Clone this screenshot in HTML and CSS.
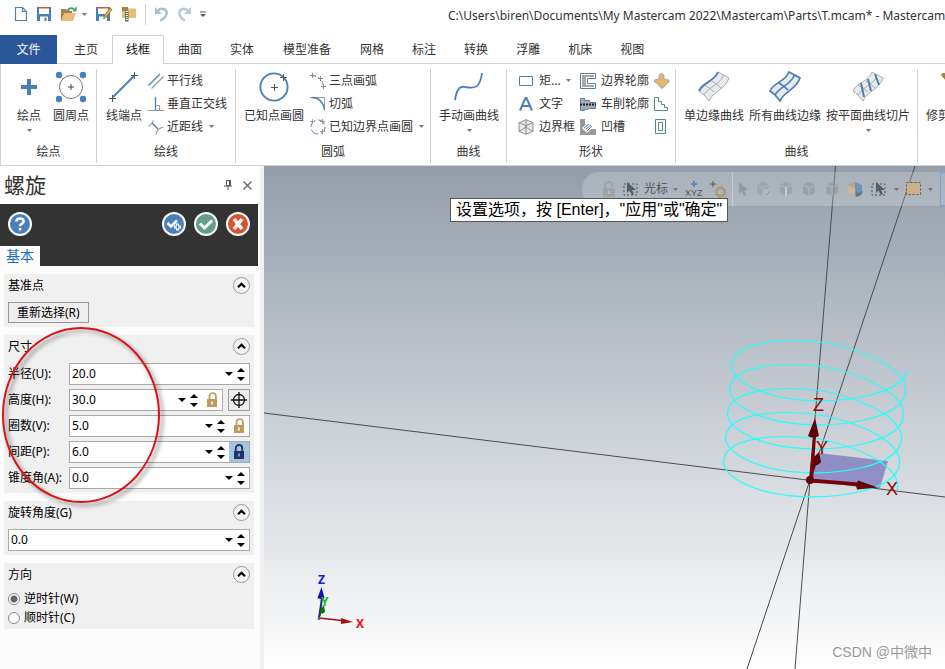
FILE: index.html
```html
<!DOCTYPE html>
<html lang="zh-CN">
<head>
<meta charset="utf-8">
<title>Mastercam</title>
<link rel="stylesheet" href="styles.css">
</head>
<body>
<svg class="defs" aria-hidden="true">
  <symbol id="caret" viewBox="0 0 5 3"><path d="M0 0h5L2.500 3z" fill="currentColor"/></symbol>
  <symbol id="drop" viewBox="0 0 8 4"><path d="M0 0h8L4 4z"/></symbol>
  <symbol id="up" viewBox="0 0 8 4"><path d="M0 4h8L4 0z"/></symbol>
  <symbol id="fold" viewBox="0 0 17 17"><circle cx="8.500" cy="8.500" r="8" fill="#f4f4f4" stroke="#999"/><path d="M5 10.200l3.500-3.500L12 10.200" fill="none" stroke="#000" stroke-width="2.200"/></symbol>
  <symbol id="unlock" viewBox="0 0 14 16"><path d="M4.500 7V4a3.200 3 0 0 1 6.400 0v3" fill="none" stroke="#c09a5c" stroke-width="1.700"/><path d="M2 7h10v8H2z" fill="#c09a5c"/><path d="M7 9.500v3" stroke="#fff" stroke-width="1.500"/></symbol>
  <symbol id="lock" viewBox="0 0 14 16"><path d="M3.800 7V4a3.200 3 0 0 1 6.400 0v3" fill="none" stroke="#22306c" stroke-width="1.800"/><path d="M2 7h10v8H2z" fill="#22306c"/><path d="M7 9.500v3" stroke="#b5cde4" stroke-width="1.300"/></symbol>
  <symbol id="mesh" viewBox="0 0 32 32"><path d="M20 1C16 11 5 11 1 20q5 3 10 10C15 20 27 19 31 7 28 5 25 4 20 1z" fill="#e8eaec"/></symbol>
  <symbol id="cube" viewBox="0 0 16 16"><path d="M8 1l6 2.500v8.500l-6 3-6-3V3.500z" fill="#8e979f"/><path d="M2 4l6 2.500V15M8 6.500L14 4" fill="none" stroke="#b6bec6"/></symbol>
</svg>

<header class="titlebar">
  <div class="quick">
    <button aria-label="新建"><svg width="14" height="16"><path d="M1.500 1.500h7l4 4v9h-11zM8.500 1.500v4h4" fill="#fff" stroke="#4a80ba" stroke-width="1.200"/></svg></button>
    <button aria-label="保存"><svg width="16" height="16"><path d="M1 1h14v14H1z" fill="#4a80ba"/><path d="M3 2h10v6H3z" fill="#fff"/><path d="M3 1h10v1.500H3z" fill="#d9532c"/><path d="M4 10.500h8V15H4z" fill="#fff"/><path d="M8.500 11.500h2V15h-2z" fill="#4a80ba"/></svg></button>
    <button aria-label="打开"><svg width="17" height="16"><path d="M1 3h5l1 2h5v10H1z" fill="#a97f3c"/><path d="M4 7h12l-3 8H1z" fill="#e8bd79"/><path d="M8 5.500C8 2 11 1.500 14 3" fill="none" stroke="#4d9a7d" stroke-width="2"/><path d="M12.500 5.500h4V0z" fill="#4d9a7d"/></svg></button>
    <svg class="caret" width="5" height="3"><use href="#caret"/></svg>
    <button aria-label="另存为"><svg width="18" height="16"><path d="M1 1h14v14H1z" fill="#4a80ba"/><path d="M3 2h10v6H3z" fill="#fff"/><path d="M3 1h10v1.500H3z" fill="#d9532c"/><path d="M4 10.500h8V15H4z" fill="#fff"/><path d="M8.500 13l1-3.500L15 2l2 1.500L11.500 11z" fill="#eeb23c" stroke="#7d5c20" stroke-width=".7"/></svg></button>
    <button aria-label="压缩"><svg width="16" height="16"><path d="M1 1h6l1 1.500h7V12H1z" fill="#e8bd79"/><path d="M1 1h6v4H1z" fill="#a97f3c"/><path d="M4 5h3.500v10.500H4z" fill="#666"/><path d="M5.800 5v10" stroke="#fff" stroke-width="2" stroke-dasharray="1 1"/></svg></button>
    <span class="rule"></span>
    <button aria-label="撤销"><svg width="15" height="16"><path d="M3 5.500C8 0 13.500 4 12.500 8c-.5 2.500-3 5-6.500 6.500" fill="none" stroke="#a6bedb" stroke-width="2.400"/><path d="M1 1v7h7z" fill="#a6bedb"/></svg></button>
    <button aria-label="重做"><svg width="15" height="16"><path d="M12 5.500C7 0 1.500 4 2.500 8c.5 2.500 2 5 5.500 6.500" fill="none" stroke="#b4c8df" stroke-width="2.400"/><path d="M14 1v7H7z" fill="#b4c8df"/></svg></button>
    <button aria-label="自定义"><svg width="6" height="7"><path d="M0 1h6" stroke="#555"/><path d="M0 3h6L3 6z" fill="#555"/></svg></button>
  </div>
  <div class="caption">C:\Users\biren\Documents\My Mastercam 2022\Mastercam\Parts\T.mcam* - Mastercam</div>
</header>

<nav class="tabs">
  <button class="tab file">文件</button>
  <button class="tab">主页</button>
  <button class="tab active">线框</button>
  <button class="tab">曲面</button>
  <button class="tab">实体</button>
  <button class="tab long">模型准备</button>
  <button class="tab">网格</button>
  <button class="tab">标注</button>
  <button class="tab">转换</button>
  <button class="tab">浮雕</button>
  <button class="tab">机床</button>
  <button class="tab">视图</button>
</nav>

<div class="ribbon">
  <section class="group g-point">
    <div class="tools">
      <button class="big"><svg width="16" height="32"><path d="M8 8v16M0 16h16" stroke="#4a80ba" stroke-width="4"/></svg><span>绘点</span><svg class="caret" width="5" height="3"><use href="#caret"/></svg></button>
      <button class="big"><svg width="32" height="32"><circle cx="16" cy="16" r="11.500" fill="#fff" stroke="#777"/><path d="M16 13v6M13 16h6" stroke="#444"/><g fill="#4a80ba"><circle cx="4" cy="4" r="3.200"/><circle cx="28" cy="4" r="3.200"/><circle cx="4" cy="28" r="3.200"/><circle cx="28" cy="28" r="3.200"/></g></svg><span>圆周点</span></button>
    </div>
    <h2>绘点</h2>
  </section>
  <section class="group g-line">
    <div class="tools">
      <button class="big"><svg width="32" height="32"><path d="M5 26L26 5" stroke="#4a80ba" stroke-width="2"/><path d="M26.500 1v7M23 4.500h7M4.500 24v7M1 27.500h7" stroke="#555"/></svg><span>线端点</span></button>
      <div class="stack">
        <button class="small"><svg width="16" height="16"><path d="M.5 12.500L12 1" stroke="#4a80ba" stroke-width="1.300"/><path d="M3.500 15.500L15.500 3.500" stroke="#999" stroke-width="1.200"/></svg>平行线</button>
        <button class="small"><svg width="16" height="16"><path d="M0 14.500h16M8.500 9.500h3v5" stroke="#999" fill="none"/><path d="M7.500 1v13" stroke="#4a80ba" stroke-width="1.300"/></svg>垂直正交线</button>
        <button class="small"><svg width="16" height="16"><path d="M.5 7.500q3-2 5-6M8 15.500q1-6 7.500-7.500" stroke="#999" fill="none" stroke-width="1.200"/><path d="M4 4l6 6" stroke="#4a80ba" stroke-width="1.400"/></svg>近距线<svg class="caret" width="5" height="3"><use href="#caret"/></svg></button>
      </div>
    </div>
    <h2>绘线</h2>
  </section>
  <section class="group g-arc">
    <div class="tools">
      <button class="big"><svg width="32" height="32"><circle cx="16" cy="16" r="13.600" fill="none" stroke="#4a80ba" stroke-width="1.900"/><path d="M16.500 13v7M13 16.500h7M25.500 3v7M22 6.500h7" stroke="#555"/></svg><span>已知点画圆</span></button>
      <div class="stack">
        <button class="small"><svg width="16" height="16"><path d="M2 2.500q10 1 11.500 11" stroke="#4a80ba" stroke-dasharray="4 2" fill="none"/><path d="M2.500 0v5M0 2.500h5M10.500 3v5M8 5.500h5M13.500 11v5M11 13.500h5" stroke="#888"/></svg>三点画弧</button>
        <button class="small"><svg width="16" height="16"><path d="M0 1.500h15M14.500 1v14" stroke="#999"/><path d="M2 1.500q10 0 12.500 12" stroke="#4a80ba" fill="none" stroke-width="1.300"/></svg>切弧</button>
        <button class="small"><svg width="16" height="16"><circle cx="8" cy="8" r="7" stroke="#4a80ba" fill="none" stroke-dasharray="8 3"/><path d="M2.500 0v5M0 2.500h5M12.500 0v5M10 2.500h5M12.500 10v5M10 12.500h5" stroke="#999"/></svg>已知边界点画圆<svg class="caret" width="5" height="3"><use href="#caret"/></svg></button>
      </div>
    </div>
    <h2>圆弧</h2>
  </section>
  <section class="group g-spline">
    <div class="tools">
      <button class="big"><svg width="32" height="32"><path d="M2 29C4 16 8 15 12 16c10 2 15 1 17-14" fill="none" stroke="#4a80ba" stroke-width="1.800"/></svg><span>手动画曲线</span><svg class="caret" width="5" height="3"><use href="#caret"/></svg></button>
    </div>
    <h2>曲线</h2>
  </section>
  <section class="group g-shape">
    <div class="tools">
      <div class="stack">
        <button class="small"><svg width="16" height="16"><path d="M1.500 3.500h13v9h-13z" fill="none" stroke="#4a80ba"/></svg>矩...<svg class="caret" width="5" height="3"><use href="#caret"/></svg></button>
        <button class="small"><svg width="16" height="16"><path d="M2 14.500L7.500 2h1L14 14.500M4.500 10h7" fill="none" stroke="#4a80ba" stroke-width="2"/></svg>文字</button>
        <button class="small"><svg width="16" height="16"><path d="M8 .700l7 3v8.600l-7 3-7-3V3.700z" fill="#e8eaec"/><path d="M8 .700l7 3v8.600l-7 3-7-3V3.700zM1 3.700l7 3 7-3M8 6.700v8.600M8 .700v8M1 12.300l7-4 7 4" fill="none" stroke="#777" stroke-width=".8"/></svg>边界框</button>
      </div>
      <div class="stack">
        <button class="small"><svg width="16" height="16"><path d="M.5.500h15v5h-8v5h8v5H.5z" fill="#fff" stroke="#4a80ba"/><path d="M2 2h12v2H6v8h8v2H2z" fill="#b0a698"/></svg>边界轮廓</button>
        <button class="small"><svg width="16" height="16"><path d="M.5 2.500h4v2h5l1 2h5v6h-6l-2 1h-3v1h-4z" fill="#aaa" stroke="#4a80ba"/><path d="M0 8.500h16" stroke="#222" stroke-width="2" stroke-dasharray="2 1"/></svg>车削轮廓</button>
        <button class="small"><svg width="16" height="16"><path d="M0 0h5v5l6 5h5v6H0z" fill="#999"/><path d="M2 9l7-6 5 4-7 7z" fill="#fff"/><path d="M4 9l5-4M6 10l5-4M7 12l5-5" stroke="#4a80ba"/></svg>凹槽</button>
      </div>
      <div class="stack">
        <button class="small" aria-label="轮廓一"><svg width="16" height="16"><path d="M5 6V2.500Q7.500-1.500 10 2.500V6l5 1v2l-3 2-1 2-3 2.500L5 13l-1-2L.5 9V7z" fill="#e8b66d" stroke="#8fa0ae" stroke-width=".8"/></svg></button>
        <button class="small" aria-label="轮廓二"><svg width="16" height="16"><path d="M.5 1.500h4v4h3v3h3v3h3v3H.5z" fill="none" stroke="#4d8f78"/></svg></button>
        <button class="small" aria-label="轮廓三"><svg width="16" height="16"><path d="M1.500.500h10v14h-10zM4.500 3.500h4v8h-4z" fill="none" stroke="#4d8f78"/></svg></button>
      </div>
    </div>
    <h2>形状</h2>
  </section>
  <section class="group g-curve">
    <div class="tools">
      <button class="big"><svg width="32" height="32"><use href="#mesh"/><path d="M20 1q6 3 11 6C27 19 15 20 11 30Q6 23 1 20M25.500 4C21 15 11 15 6 24M6 14q5 2 10 7M14 10q5 3 9 7" fill="none" stroke="#aaa"/><path d="M20 1C16 11 5 11 1 20" fill="none" stroke="#4a80ba" stroke-width="2"/></svg><span>单边缘曲线</span></button>
      <button class="big"><svg width="32" height="32"><use href="#mesh"/><path d="M20 1C16 11 5 11 1 20q5 3 10 10C15 20 27 19 31 7 28 5 25 4 20 1zM25.500 4C21 15 11 15 6 24M10 12q5 3 9 7" fill="none" stroke="#4a80ba" stroke-width="1.700"/></svg><span>所有曲线边缘</span></button>
      <button class="big"><svg width="32" height="32"><use href="#mesh"/><path d="M20 1C16 11 5 11 1 20q5 3 10 10C15 20 27 19 31 7 28 5 25 4 20 1zM25.500 4C21 15 11 15 6 24M6 14q5 2 10 7M14 10q5 3 9 7" fill="none" stroke="#aaa"/><path d="M9 12l3 14M16 8l3 12M23 3l4 11" stroke="#4a80ba" stroke-width="2"/></svg><span>按平面曲线切片</span><svg class="caret" width="5" height="3"><use href="#caret"/></svg></button>
    </div>
    <h2>曲线</h2>
  </section>
  <section class="group g-trim">
    <div class="tools">
      <button class="big"><svg width="24" height="32"><path d="M15 4q2-4 5-1h4v7h-4z" fill="#a97f3c"/></svg><span>修剪</span></button>
    </div>
  </section>
</div>

<main class="work">
  <aside class="panel">
    <div class="head">
      <h1>螺旋</h1>
      <button aria-label="固定"><svg width="8" height="10"><path d="M2.500.500h4v5h-4zM5.500 1v4M0 6h8M4 6v4" fill="none" stroke="#555"/></svg></button>
      <button aria-label="关闭"><svg width="9" height="9"><path d="M.5.500l8 8M8.500.500l-8 8" stroke="#666" stroke-width="1.400"/></svg></button>
    </div>
    <div class="dark">
      <div class="actions">
        <button class="help" aria-label="帮助"><svg width="24" height="24"><circle cx="12" cy="12" r="11" fill="#4a80ba" stroke="#fff" stroke-width="2"/><path d="M8.300 9.700q.3-3.200 3.700-3.200t3.600 2.700q0 1.700-2 2.800-1.600.800-1.600 2.300M12 16v2.500" fill="none" stroke="#fff" stroke-width="2.600"/></svg></button>
        <button aria-label="应用"><svg width="24" height="24"><circle cx="12" cy="12" r="11" fill="#4a80ba" stroke="#fff" stroke-width="2"/><path d="M5.500 11l3.500 3.500 6-6" fill="none" stroke="#fff" stroke-width="2.500"/><path d="M15.500 11.500v7M12 15h7" stroke="#fff" stroke-width="3"/><path d="M15.500 13v4M13.500 15h4" stroke="#4a80ba"/></svg></button>
        <button aria-label="确定"><svg width="24" height="24"><circle cx="12" cy="12" r="11" fill="#639f87" stroke="#fff" stroke-width="2"/><path d="M6 11.500l4.500 4.500L18 8.500" fill="none" stroke="#fff" stroke-width="3"/></svg></button>
        <button aria-label="取消"><svg width="24" height="24"><circle cx="12" cy="12" r="11" fill="#d9532c" stroke="#fff" stroke-width="2"/><path d="M8 7l8 10M16 7L8 17" stroke="#fff" stroke-width="3.600"/></svg></button>
      </div>
      <button class="page">基本</button>
    </div>

    <section class="card">
      <div class="bar"><h3>基准点</h3><button aria-label="折叠"><svg width="17" height="17"><use href="#fold"/></svg></button></div>
      <button class="push">重新选择(R)</button>
    </section>

    <section class="card">
      <div class="bar"><h3>尺寸</h3><button aria-label="折叠"><svg width="17" height="17"><use href="#fold"/></svg></button></div>
      <div class="rows">
        <label for="r">半径(U):</label>
        <div class="line"><div class="field"><input id="r" value="20.0"><button class="drop" aria-label="列表"><svg width="8" height="4"><use href="#drop"/></svg></button><span class="spin"><button aria-label="增"><svg width="8" height="4"><use href="#up"/></svg></button><button aria-label="减"><svg width="8" height="4"><use href="#drop"/></svg></button></span></div></div>
        <label for="h">高度(H):</label>
        <div class="line"><div class="field"><input id="h" value="30.0"><button class="drop" aria-label="列表"><svg width="8" height="4"><use href="#drop"/></svg></button><span class="spin"><button aria-label="增"><svg width="8" height="4"><use href="#up"/></svg></button><button aria-label="减"><svg width="8" height="4"><use href="#drop"/></svg></button></span><button class="key" aria-label="锁定"><svg width="14" height="16"><use href="#unlock"/></svg></button></div><button class="pick" aria-label="拾取"><svg width="16" height="16"><circle cx="8" cy="8" r="5.500" fill="none" stroke="#111" stroke-width="1.300"/><path d="M8 0v16M0 8h16" stroke="#111" stroke-width="1.300"/></svg></button></div>
        <label for="v">圈数(V):</label>
        <div class="line"><div class="field"><input id="v" value="5.0"><button class="drop" aria-label="列表"><svg width="8" height="4"><use href="#drop"/></svg></button><span class="spin"><button aria-label="增"><svg width="8" height="4"><use href="#up"/></svg></button><button aria-label="减"><svg width="8" height="4"><use href="#drop"/></svg></button></span><button class="key" aria-label="锁定"><svg width="14" height="16"><use href="#unlock"/></svg></button></div></div>
        <label for="p">间距(P):</label>
        <div class="line"><div class="field"><input id="p" value="6.0"><button class="drop" aria-label="列表"><svg width="8" height="4"><use href="#drop"/></svg></button><span class="spin"><button aria-label="增"><svg width="8" height="4"><use href="#up"/></svg></button><button aria-label="减"><svg width="8" height="4"><use href="#drop"/></svg></button></span><button class="key on" aria-label="解锁"><svg width="14" height="16"><use href="#lock"/></svg></button></div></div>
        <label for="a">锥度角(A):</label>
        <div class="line"><div class="field"><input id="a" value="0.0"><button class="drop" aria-label="列表"><svg width="8" height="4"><use href="#drop"/></svg></button><span class="spin"><button aria-label="增"><svg width="8" height="4"><use href="#up"/></svg></button><button aria-label="减"><svg width="8" height="4"><use href="#drop"/></svg></button></span></div></div>
      </div>
      <svg class="ring" width="174" height="192" viewBox="-5 319 174 192" aria-hidden="true"><ellipse cx="81" cy="415" rx="78" ry="87" fill="none" stroke="#dc1414" stroke-width="2"/></svg>
    </section>

    <section class="card">
      <div class="bar"><h3><label for="g">旋转角度(G)</label></h3><button aria-label="折叠"><svg width="17" height="17"><use href="#fold"/></svg></button></div>
      <div class="line"><div class="field"><input id="g" value="0.0"><button class="drop" aria-label="列表"><svg width="8" height="4"><use href="#drop"/></svg></button><span class="spin"><button aria-label="增"><svg width="8" height="4"><use href="#up"/></svg></button><button aria-label="减"><svg width="8" height="4"><use href="#drop"/></svg></button></span></div></div>
    </section>

    <section class="card dense">
      <div class="bar"><h3>方向</h3><button aria-label="折叠"><svg width="17" height="17"><use href="#fold"/></svg></button></div>
      <div class="choices">
        <label><input type="radio" name="dir" checked>逆时针(W)</label>
        <label><input type="radio" name="dir">顺时针(C)</label>
      </div>
    </section>
  </aside>

  <div class="view">
    <svg class="scene" viewBox="264 166 681 503" preserveAspectRatio="xMidYMid slice">
      <g stroke="#4c4c4c" stroke-width="1"><path d="M264 413L945 497M835.500 166L810 480 795 669M915 166L810 480 747 669" fill="none"/></g>
      <path d="M818 453l70 8-8 27-70-8z" fill="#6c69b8" fill-opacity=".65"/>
      <g fill="none" stroke="#2ff" stroke-width="1.200">
        <path id="coil" d="M897 490.500C903 468 862 447 816 438.500 770 433 728 439 724 458.500 720 474 748 491.500 791 495.800 838 500 893 490 899 466.500"/>
        <use href="#coil" x="2" y="-24"/><use href="#coil" x="4" y="-48"/><use href="#coil" x="6" y="-72"/><use href="#coil" x="8" y="-96"/>
      </g>
      <g fill="#600008" stroke="none">
        <path d="M809 480l4-44h3l-3 44zM810 478.500l48 4v3.500l-48-3.500z" fill="#780008"/>
        <path d="M815 418l-7 18q5 3 11 0zM878 487.500l-20-7q-3 5-1 9z"/>
        <path d="M813 474l1-11q-3-3 0-6l5-5 2 10q-3 4-5 3z"/>
        <circle cx="810" cy="480" r="4"/>
      </g>
      <g class="axis-big"><text x="813" y="411">Z</text><text x="816" y="454">Y</text><text x="886" y="495">X</text></g>
      <path d="M319 618l3-20" stroke="#22a" stroke-width="2"/><path d="M321.500 587l-4 11q3 2 7 0z" fill="#11b"/>
      <path d="M320 616l2-11" stroke="#060"/><path d="M324 605l-4 6 2 3 3-2z" fill="#070"/>
      <path d="M319 618l23 2.500" stroke="#a11" stroke-width="1.500"/><path d="M353 622l-12-4v6z" fill="#a11"/>
      <circle cx="319" cy="618.500" r="1.500" fill="#666"/>
      <g class="axis-small"><text x="318" y="584" fill="#11f">Z</text><text x="321" y="606" fill="#1b1">Y</text><text x="356" y="628" fill="#f00">X</text></g>
    </svg>

    <div class="picker">
      <svg width="14" height="16" opacity=".35"><path d="M3 7V4.500a3.500 3.500 0 0 1 7-.5v2" fill="none" stroke="#888" stroke-width="2"/><path d="M1 7h12v9H1z" fill="#888"/><path d="M7 10v3" stroke="#ccc" stroke-width="2"/></svg>
      <svg width="16" height="14"><path d="M1 2h13v11H1z" fill="none" stroke="#555" stroke-dasharray="2 2"/><path d="M4 0v11l2.500-2.500L9 13l2-1-2-4h4z" fill="#555b60"/></svg>
      <span>光标</span>
      <svg class="caret" width="5" height="3"><use href="#caret"/></svg>
      <svg class="xyz" width="18" height="16"><path d="M9 0v6M6 3h6" stroke="#5d8ebb" stroke-width="2"/><text x="0" y="15">XYZ</text></svg>
      <svg width="17" height="17"><path d="M3 0v6M0 3h6" stroke="#555"/><circle cx="10.500" cy="11" r="4" fill="none" stroke="#b09a70" stroke-width="2.500"/><circle cx="10.500" cy="11" r="5.500" fill="none" stroke="#b09a70" stroke-dasharray="2 2.300"/></svg>
      <span class="cut"></span>
      <svg width="10" height="16" opacity=".55"><path d="M1 1v12l3-3 2 5 2-1-2-5h4z" fill="#7b848c"/></svg>
      <svg width="16" height="16" opacity=".45"><use href="#cube"/><circle cx="12" cy="12" r="4" fill="#b9c0c7"/><path d="M10 12l2 2 3-4" fill="none" stroke="#666"/></svg>
      <svg width="16" height="16" opacity=".5"><use href="#cube"/><path d="M8 6v9" stroke="#dde" stroke-width="2"/></svg>
      <svg width="16" height="16" opacity=".6"><use href="#cube"/></svg>
      <svg width="16" height="16" opacity=".6"><use href="#cube"/></svg>
      <svg width="17" height="16" opacity=".8"><path d="M8 1l7 3v8l-7 3-7-3V4z" fill="#5d8ebb"/><path d="M1 4l7 3v8l-7-3z" fill="#d6b98b"/><path d="M1 4l7-3v6z" fill="#b9a58a"/><path d="M9 15v-5l2 2 5-2-2 4-4 2z" fill="#596673"/></svg>
      <svg width="16" height="14"><path d="M1 2h13v11H1z" fill="none" stroke="#555" stroke-dasharray="2 2"/><path d="M5 0v11l2.500-2.500L10 13l2-1-2-4h4z" fill="#555b60"/></svg>
      <svg class="caret" width="5" height="3"><use href="#caret"/></svg>
      <svg width="15" height="14"><path d="M.5.500h14v12H.5z" fill="#c9b18c" stroke="#555" stroke-dasharray="2 2"/></svg>
      <svg class="caret" width="5" height="3"><use href="#caret"/></svg>
      <span class="boxed"></span>
    </div>
    <div class="prompt">设置选项，按 [Enter]，"应用"或"确定"</div>
    <div class="mark">CSDN @中微中</div>
  </div>
</main>
</body>
</html>
```
FILE: styles.css
```css
* { box-sizing: border-box; }

body {
  margin: 0;
  height: 100vh;
  display: flex;
  flex-direction: column;
  overflow: hidden;
  background: #fff;
  color: #333;
  font: 12px/16px "Noto Sans", "Noto Sans CJK SC", sans-serif;
}

button {
  margin: 0;
  padding: 0;
  border: 0;
  background: none;
  color: inherit;
  font: inherit;
  white-space: nowrap;
}

h1, h2, h3 { margin: 0; font-weight: normal; }
svg { display: block; flex: none; }
.defs { position: absolute; width: 0; height: 0; }
.caret { color: #777; }

/* title bar */
.titlebar {
  display: flex;
  flex: none;
  align-items: center;
  height: 35px;
  padding: 0 0 7px 14px;
}
.quick { display: flex; align-items: center; gap: 8px; width: 434px; flex: none; }
.quick > .caret { margin: 0 0 0 -3px; }
.rule { width: 1px; height: 21px; background: #d0d0d0; }
.caption { white-space: nowrap; padding-top: 4px; }

/* tabs */
.tabs { display: flex; flex: none; height: 29px; }
.tab { padding: 2px 14px 0; border: 1px solid transparent; border-width: 0 0 1px; border-bottom-color: #d2d2d2; }
.tab.long { padding: 2px 15px 0; }
.tab.file { width: 57px; background: #2a579a; color: #fff; border-color: #2a579a; }
.tab.file + .tab { padding-left: 17px; }
.tab.active { padding: 0 13px; border: 1px solid #d2d2d2; border-bottom: 0; color: #111; }
.tabs::after { content: ""; flex: 1; border-bottom: 1px solid #d2d2d2; }

/* ribbon */
.ribbon {
  display: flex;
  flex: none;
  height: 102px;
  padding-top: 5px;
  border-bottom: 1px solid #d2d2d2;
  border-left: 1px solid #d2d2d2;
  overflow: hidden;
}
.group { flex: none; border-right: 1px solid #d2d2d2; height: 94px; }
.group h2 { font-size: 12px; line-height: 27px; text-align: center; }
.tools { display: flex; height: 69px; padding-left: 8px; }
.big { display: flex; flex-direction: column; align-items: center; justify-content: flex-start; padding-top: 2px; }
.big span { margin: 5px 0; }
.stack { display: flex; flex-direction: column; }
.small { display: flex; align-items: center; gap: 3px; height: 23px; }
.small .caret { margin-left: 3px; }
.g-point { width: 96px; }
.g-point .tools { padding-left: 16px; gap: 12px; }
.g-line { width: 139px; }
.g-line .tools { padding-left: 9px; gap: 6px; }
.g-arc { width: 195px; }
.g-arc .tools { gap: 6px; }
.g-spline { width: 76px; }
.g-shape { width: 169px; }
.g-shape .tools { padding-left: 11px; gap: 5px; }
.g-shape .small { gap: 5px; }
.g-shape .small .caret { margin-left: 0; }
.g-curve { width: 242px; }
.g-curve .tools { gap: 5px; }
.g-trim { border: 0; }

/* workspace */
.work { display: flex; flex: 1; min-height: 0; }
.panel {
  flex: none;
  width: 264px;
  background: #fcfcfc;
  border-right: 4px solid #f1f1f1;
  color: #000;
}
.head { display: flex; align-items: center; gap: 11px; height: 38px; padding: 0 8px 0 4px; background: #fff; }
.head h1 { flex: 1; font-size: 21px; line-height: 36px; color: #333; }
.dark { width: 258px; height: 62px; background: #333; }
.actions { display: flex; gap: 8px; padding: 8px 8px 0; height: 42px; align-items: flex-start; }
.help { margin-right: auto; }
.page { width: 40px; height: 20px; background: #fcfcfc; color: #1a6fc0; font-size: 14px; line-height: 20px; }

.card { position: relative; width: 250px; margin: 8px 4px 0; padding: 0 4px 4px; background: #f0f0f0; }
.bar { display: flex; align-items: center; justify-content: space-between; height: 23px; margin-bottom: 5px; }
.bar h3 { font-size: 12px; }
.dense { padding-bottom: 2px; }
.dense .bar { margin-bottom: 3px; }
.push { display: block; height: 21px; padding: 0 8px; border: 1px solid #999; background: #eee; }
.rows { display: grid; grid-template-columns: 61px minmax(0, 1fr); row-gap: 4px; align-items: center; white-space: nowrap; }
.line { display: flex; gap: 5px; }
.field { display: flex; flex: 1; min-width: 0; height: 22px; border: 1px solid #aaa; background: #fff; }
.field input { flex: 1; width: 0; min-width: 0; padding: 0 2px; border: 0; background: none; font: inherit; outline: 0; }
.field button, .spin { flex: none; }
.field .drop { display: flex; align-items: center; width: 12px; }
.spin { display: flex; flex-direction: column; justify-content: space-between; width: 12px; padding: 4px 0 3px; }
.field .key { display: flex; align-items: center; justify-content: center; width: 20px; }
.field .key.on { background: #a3c5e0; }
.pick { display: flex; flex: none; align-items: center; justify-content: center; width: 22px; border: 1px solid #999; background: #eee; }
.choices { display: flex; flex-direction: column; }
.choices label { display: flex; align-items: center; gap: 4px; height: 19px; }
.choices input {
  appearance: none;
  width: 12px;
  height: 12px;
  margin: 0;
  border: 1px solid #888;
  border-radius: 50%;
  background: #fff;
}
.choices input:checked { background: radial-gradient(circle, #666 3px, #fff 4px); }

/* annotation ring drawn over the size fields */
.ring {
  position: absolute;
  left: -9px;
  top: -16px;
  z-index: 2;
  pointer-events: none;
  filter: drop-shadow(3px 3px 2px rgba(0, 0, 0, .5));
}

/* graphics view */
.view { position: relative; flex: 1; min-width: 0; background: linear-gradient(#939eaa, #fff); overflow: hidden; }
.scene { width: 100%; height: 100%; }
.axis-big { font: 18px "Liberation Sans", sans-serif; fill: #900808; }
.axis-small { font: bold 12px "Open Sans", sans-serif; }

.picker {
  position: absolute;
  top: 6px;
  right: 0;
  display: flex;
  align-items: center;
  gap: 7px;
  height: 34px;
  padding-left: 20px;
  border-radius: 17px 0 0 17px;
  background: rgba(255, 255, 255, .2);
  color: #555;
}
.picker span { margin: 0 -2px; }
.xyz { font: 9px "Liberation Sans", sans-serif; fill: #555; }
.picker .cut { width: 1px; height: 34px; background: rgba(255, 255, 255, .3); }
.picker .boxed { width: 5px; height: 34px; margin: 0; border: 1px solid #6fa8dc; border-right: 0; }

.prompt {
  position: absolute;
  left: 186px;
  top: 32px;
  padding: 0 5px;
  border: 1px solid #555;
  background: #fff;
  color: #000;
  font: 16px/22px "Liberation Sans", "Noto Sans CJK SC", sans-serif;
  white-space: nowrap;
}
.mark {
  position: absolute;
  right: 13px;
  bottom: 7px;
  color: #999;
  font: 14px/20px "Liberation Sans", "Noto Sans CJK SC", sans-serif;
}
```
